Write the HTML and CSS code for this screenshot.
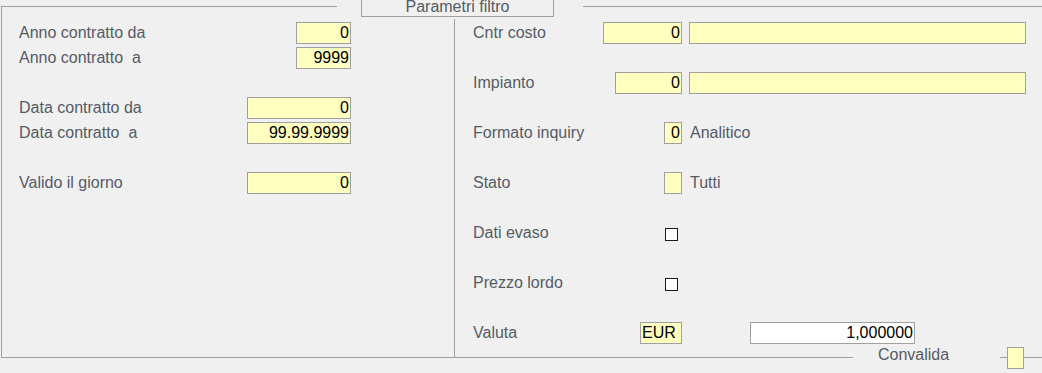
FILE: index.html
```html
<!DOCTYPE html>
<html lang="it">
<head>
  <meta charset="UTF-8">
  <title>Parametri filtro</title>
  <link rel="stylesheet" href="styles.css">
</head>
<body>
  <div class="frame">
    <div class="caption"><span class="caption-box">Parametri filtro</span></div>

    <div class="col-left">
      <div class="group">
        <div class="lrow"><label>Anno contratto da</label><input class="fld w55" value="0"></div>
        <div class="lrow"><label>Anno contratto&nbsp; a</label><input class="fld w55" value="9999"></div>
      </div>
      <div class="group">
        <div class="lrow"><label>Data contratto da</label><input class="fld w104" value="0"></div>
        <div class="lrow"><label>Data contratto&nbsp; a</label><input class="fld w104" value="99.99.9999"></div>
      </div>
      <div class="group">
        <div class="lrow"><label>Valido il giorno</label><input class="fld w104" value="0"></div>
      </div>
    </div>

    <div class="col-right">
      <div class="rrow">
        <div class="rcell"><label>Cntr costo</label><input class="fld w79" value="0"></div>
        <input class="fld wide" value="">
      </div>
      <div class="rrow">
        <div class="rcell"><label>Impianto</label><input class="fld w67" value="0"></div>
        <input class="fld wide" value="">
      </div>
      <div class="rrow">
        <div class="rcell"><label>Formato inquiry</label><input class="fld w18" value="0"></div>
        <span class="note">Analitico</span>
      </div>
      <div class="rrow">
        <div class="rcell"><label>Stato</label><input class="fld w18" value=""></div>
        <span class="note">Tutti</span>
      </div>
      <div class="rrow">
        <div class="rcell"><label>Dati evaso</label><input type="checkbox" class="chk"></div>
      </div>
      <div class="rrow">
        <div class="rcell"><label>Prezzo lordo</label><input type="checkbox" class="chk"></div>
      </div>
      <div class="rrow">
        <div class="rcell"><label>Valuta</label><input class="fld w42 left" value="EUR"></div>
        <input class="fld rate" value="1,000000">
      </div>
    </div>
  </div>

  <div class="footer">
    <span class="rule rule-long"></span>
    <span class="foot-label">Convalida</span>
    <span class="rule rule-short"></span>
    <input class="fld foot-box" value="">
    <span class="rule rule-fill"></span>
  </div>
</body>
</html>
```

FILE: styles.css
```css
body {
  margin: 0;
  background: #f0f0f0;
  font-family: "Liberation Sans", Arial, sans-serif;
  font-size: 16px;
  color: #555b66;
  overflow: hidden;
}
label {
  white-space: nowrap;
}
.frame {
  position: relative;
  display: flex;
  margin: 6px 0 0 1px;
  height: 351px;
  border-top: 1px solid #a0a0a0;
  border-left: 1px solid #a0a0a0;
}
.caption {
  position: absolute;
  top: -12px;
  left: 335px;
  padding: 0 29px 0 24px;
  background: #f0f0f0;
}
.caption-box {
  display: block;
  box-sizing: border-box;
  width: 193px;
  height: 22px;
  padding-top: 2px;
  line-height: 18px;
  text-align: center;
  border: 1px solid #a0a0a0;
}
.fld {
  box-sizing: border-box;
  height: 22px;
  margin: 0;
  padding: 0 1px;
  border: 1px solid #a0a0a0;
  background: #ffffc0;
  font-family: "Liberation Sans", Arial, sans-serif;
  font-size: 16px;
  color: #000;
  text-align: right;
  outline: none;
}
.fld.left { text-align: left; }
.w18 { width: 18px; }
.w42 { width: 42px; }
.w55 { width: 55px; }
.w67 { width: 67px; }
.w79 { width: 79px; }
.w104 { width: 104px; }

.col-left {
  box-sizing: border-box;
  width: 452px;
  padding: 15px 103px 0 17px;
  display: flex;
  flex-direction: column;
  gap: 28px;
}
.group {
  display: flex;
  flex-direction: column;
  gap: 3px;
}
.lrow {
  display: flex;
  align-items: center;
  justify-content: space-between;
  height: 22px;
}

.col-right {
  flex: 1;
  margin-top: 12px;
  padding: 3px 0 0 18px;
  border-left: 1px solid #a0a0a0;
  display: flex;
  flex-direction: column;
  gap: 28px;
}
.rrow {
  display: flex;
  align-items: center;
  height: 22px;
}
.rcell {
  width: 209px;
  flex: none;
  display: flex;
  align-items: center;
  justify-content: space-between;
}
.wide {
  width: 337px;
  margin-left: 7px;
}
.note {
  margin-left: 8px;
}
.rate {
  width: 165px;
  margin-left: 68px;
  background: #fff;
}
.chk {
  appearance: none;
  width: 13px;
  height: 13px;
  margin: 3px 4px 0 0;
  border: 1px solid #1a1a1a;
  background: #fff;
}

.footer {
  display: flex;
  height: 22px;
  margin: -11px 0 0 1px;
}
.rule {
  align-self: flex-start;
  height: 1px;
  margin-top: 10px;
  background: #a0a0a0;
}
.rule-long { width: 852px; }
.foot-label {
  margin-left: 25px;
  line-height: 16px;
}
.rule-short {
  width: 7px;
  margin-left: 51px;
}
.foot-box {
  width: 17px;
  text-align: left;
}
.rule-fill { flex: 1; }
```
